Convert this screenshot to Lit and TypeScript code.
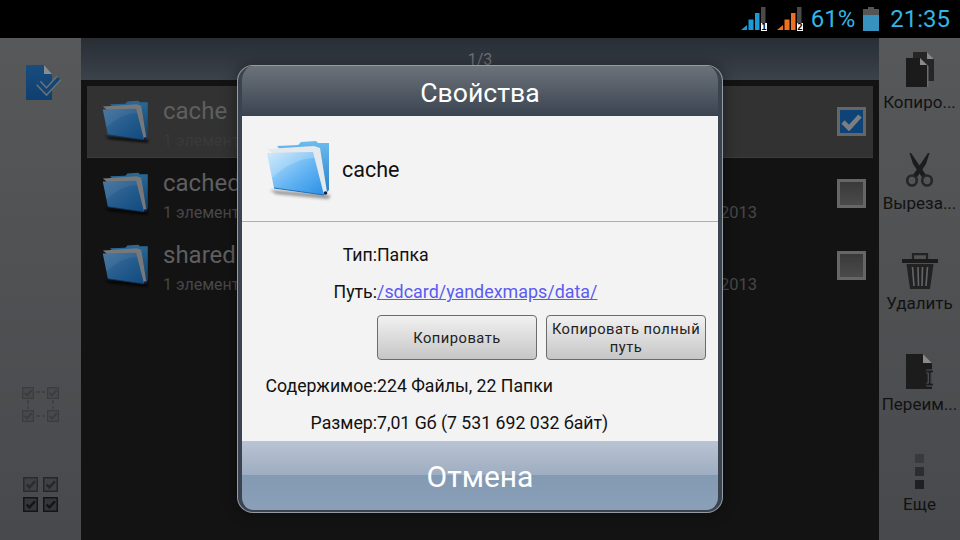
import { LitElement, html, css, svg } from "lit";
import { customElement } from "lit/decorators.js";

const folder = (id: string, dim: boolean) => svg`
<svg class="folder" viewBox="0 0 66 62" width="66" height="62">
  <defs>
    <linearGradient id="${id}a" x1="0" y1="0" x2="1" y2="1">
      <stop offset="0" stop-color="${dim ? "#40709c" : "#c4e6fd"}"/><stop offset="0.55" stop-color="${dim ? "#235a8c" : "#63b4f2"}"/><stop offset="1" stop-color="${dim ? "#134a7e" : "#2c8fe6"}"/>
    </linearGradient>
    <linearGradient id="${id}b" x1="0" y1="0" x2="0" y2="1">
      <stop offset="0" stop-color="${dim ? "#2a6a98" : "#6bbcf0"}"/><stop offset="1" stop-color="${dim ? "#123f68" : "#2a7fc9"}"/>
    </linearGradient>
    <filter id="${id}s" x="-20%" y="-100%" width="140%" height="300%"><feGaussianBlur stdDeviation="1.5"/></filter>
  </defs>
  <path d="M4 50 L58 54 L65 56 L62 59 L10 54 Z" fill="${dim ? "#000" : "#777"}" opacity="0.75" filter="url(#${id}s)"/>
  <path d="M11 6 L32 5 L35 2 L50 1 L52 3 L63 3 L63 50 L60 53 L50 50 Z" fill="url(#${id}b)"/>
  <path d="M1 9 L48 6 L54 8 L61 52 L58 54 Z" fill="${dim ? "#77787a" : "#e6e9ec"}"/>
  <path d="M1 13 L47 12 L58 55 L8 48 Z" fill="url(#${id}a)"/>
  <path d="M1 13 L47 12 L49 18 C32 18 18 27 6 38 Z" fill="#fff" opacity="${dim ? "0.06" : "0.2"}"/>
  <path d="M8 48 L58 55" stroke="${dim ? "#0d3660" : "#1f6fbd"}" stroke-width="1" fill="none"/>
  <circle cx="59.5" cy="53" r="1.8" fill="#10204a"/>
</svg>`;

const check = (fill: string, stroke: string) => svg`
<rect x="0.75" y="0.75" width="13.5" height="13.5" fill="${fill}" stroke="${stroke}" stroke-width="1.5"/>
<path d="M3.6 7.5 L6.4 10.4 L12 4.2" fill="none" stroke="${stroke}" stroke-width="2.4"/>`;

@customElement("app-root")
export class AppRoot extends LitElement {
  static styles = css`
    :host { display: block; width: 960px; height: 540px; overflow: hidden; position: relative; background: #000; font-family: Roboto, "Noto Sans", sans-serif; }
    .status { height: 38px; background: #000; display: flex; align-items: center; justify-content: flex-end; color: #33b5e5; font-size: 24px; padding-right: 10px; box-sizing: border-box; }
    .status .pct { margin: 0 8px 0 8px; }
    .status .time { margin-left: 11px; }
    .sig + .sig { margin-left: 10px; }
    .body { height: 502px; display: flex; background: #131313; }
    .side { background: linear-gradient(#565859, #47494c); flex: none; display: flex; flex-direction: column; align-items: center; }
    .left { width: 81px; padding-top: 27px; box-sizing: border-box; }
    .left .doc { margin-left: 6px; }
    .left .grid1 { margin-top: 287px; }
    .left .grid2 { margin-top: 55px; }
    .left svg { display: block; }
    .main { flex: 1; min-width: 0; display: flex; flex-direction: column; background: #131313; }
    .page { height: 42px; flex: none; background: linear-gradient(#292e35, #3c424a); color: #6e7278; font-size: 16px; text-align: center; line-height: 44px; }
    .list { display: flex; flex-direction: column; padding: 6px 6px 0; }
    .row { height: 72px; box-sizing: border-box; display: flex; align-items: flex-start; position: relative; padding-left: 15px; flex: none; }
    .row.first { background: #323232; border-bottom: 1px solid #3c3c3c; }
    .row .folder { width: 48px; height: 45px; flex: none; margin: 14px 13px 0 0; }
    .txt { display: flex; flex-direction: column; margin-top: 10px; }
    .name { color: #5f5f5f; font-size: 24px; line-height: 30px; }
    .sub { color: #474747; font-size: 16px; line-height: 22px; height: 22px; margin-top: 4px; }
    .first .sub { color: #3a3a3a; }
    .date { position: absolute; right: 116px; top: 44px; line-height: 22px; color: #474747; font-size: 16.5px; }
    .cb { position: absolute; right: 7px; top: 21px; width: 29px; height: 29px; box-sizing: border-box; border: 3px solid #666; background: linear-gradient(#3a3a3a, #4a4a4a); }
    .cb.on { background: #0d4377; display: flex; align-items: center; justify-content: center; }
    .right { width: 81px; padding-top: 14px; box-sizing: border-box; }
    .act { height: 100.5px; width: 81px; display: flex; flex-direction: column; align-items: center; color: #121212; font-size: 17px; line-height: 20px; white-space: nowrap; flex: none; }
    .act .ic { height: 36px; width: 81px; display: flex; align-items: flex-start; justify-content: center; margin-bottom: 4px; }
    .modal { position: absolute; left: 238px; top: 66px; width: 484px; height: 446px; box-sizing: border-box; border: 4px solid #3a4450; border-top: none; border-bottom-width: 2px; border-radius: 15px; background: #3a4450; box-shadow: 0 0 0 1px #979ca3, 0 0 14px 3px rgba(0,0,0,0.3); overflow: hidden; display: flex; flex-direction: column; }
    .head { height: 50px; flex: none; margin: 0 -4px; background: linear-gradient(#6c727a, #3a4450); color: #fff; font-size: 26.6px; display: flex; align-items: center; justify-content: center; padding-top: 2px; box-sizing: border-box; }
    .content { flex: 1; min-height: 0; overflow: hidden; background: #f3f3f3; color: #111; font-size: 17.7px; }
    .top { height: 106px; display: flex; align-items: center; border-bottom: 1px solid #aeaeae; padding-left: 24px; box-sizing: border-box; }
    .top .folder { margin-right: 10px; margin-top: 4px; }
    .top span { font-size: 21.5px; color: #111; margin-top: 2px; }
    .info { display: grid; grid-template-columns: 135px 1fr; padding-top: 15px; }
    .k { text-align: right; height: 37px; line-height: 36px; white-space: nowrap; }
    .v { height: 37px; line-height: 36px; white-space: nowrap; }
    .link { color: #5b5bf0; text-decoration: underline; font-size: 17.9px; }
    .btns { grid-column: 2; display: flex; gap: 9px; height: 49px; padding-top: 4px; box-sizing: border-box; margin-bottom: 8px; }
    .btn { width: 160px; height: 45px; box-sizing: border-box; border: 1px solid #6b6b6b; border-radius: 4px; background: linear-gradient(#f1f1f1, #c6c6c6); color: #222; font-size: 14.7px; line-height: 18px; letter-spacing: 0.5px; display: flex; align-items: center; justify-content: center; text-align: center; padding: 1px 4px 0; }
    .cancel { height: 69px; flex: none; background: linear-gradient(#b9c4d3 0, #9eadc1 49%, #839ab3 49%, #8b9fb8 100%); color: #fff; font-size: 30px; display: flex; align-items: center; justify-content: center; padding-top: 1px; box-sizing: border-box; }
  `;

  private sig(a: string, n: string) {
    return svg`<svg class="sig" width="26" height="24" viewBox="0 0 26 24">
      <path d="M0 23 L6 23 L6 18 Z" fill="${a}"/>
      <rect x="7.5" y="12.5" width="5" height="10.5" fill="${a}"/>
      <rect x="14" y="6" width="4.5" height="17" fill="${a}"/>
      <rect x="20" y="0" width="4.5" height="16" fill="#4a4a4a"/>
      <rect x="20" y="16" width="6" height="8" fill="#fff"/>
      <text x="23" y="23" font-size="9" font-weight="700" text-anchor="middle" fill="#000" font-family="DejaVu Sans Mono">${n}</text>
    </svg>`;
  }

  private row(name: string, sub: string, date: string, on: boolean, i: number) {
    return html`<div class="row ${on ? "first" : ""}">
      ${folder("l" + i, true)}
      <div class="txt"><div class="name">${name}</div><div class="sub">${sub}</div></div>
      ${date ? html`<div class="date">${date}</div>` : ""}
      <div class="cb ${on ? "on" : ""}">${on ? svg`<svg width="21" height="18" viewBox="0 0 21 18"><path d="M2 9 L8 15 L19 3" fill="none" stroke="#7c7f82" stroke-width="4.6"/></svg>` : ""}</div>
    </div>`;
  }

  render() {
    return html`
      <div class="status">
        ${this.sig("#1a9ad6", "1")}
        ${this.sig("#f07020", "2")}
        <span class="pct">61%</span>
        <svg width="16" height="24" viewBox="0 0 16 24"><rect x="5" y="0" width="6" height="3" fill="#555"/><rect x="0" y="2" width="16" height="6" fill="#555"/><rect x="0" y="8" width="16" height="16" fill="#3793bd"/></svg>
        <span class="time">21:35</span>
      </div>
      <div class="body">
        <div class="side left">
          <svg class="doc" width="35" height="35" viewBox="0 0 35 35">
            <defs><linearGradient id="doc" x1="0" y1="0" x2="0" y2="1"><stop offset="0" stop-color="#1a4c7e"/><stop offset="1" stop-color="#0f3f70"/></linearGradient></defs>
            <path d="M0 0 H18 L26 9 V35 H0 Z" fill="url(#doc)"/>
            <path d="M18 0 L26 9 H18 Z" fill="#8a8d90"/>
            <path d="M12.5 18 L20.5 26.5 L33 13" fill="none" stroke="#6a7278" stroke-width="6.5"/>
            <path d="M12.5 18 L20.5 26.5 L33 13" fill="none" stroke="#124475" stroke-width="3.5"/>
          </svg>
          <svg class="grid1" width="37" height="35" viewBox="0 0 37 35">
            <path d="M14 5 H23 M6 13 V22 M31 13 V22 M14 29 H23" stroke="#3c3e40" stroke-width="1.5" stroke-dasharray="4 2" fill="none"/>
            <g transform="translate(0 0) scale(0.8)">${check("#47494b", "#3a3c3e")}</g>
            <g transform="translate(25 0) scale(0.8)">${check("#47494b", "#3a3c3e")}</g>
            <g transform="translate(0 23) scale(0.8)">${check("#47494b", "#3a3c3e")}</g>
            <g transform="translate(25 23) scale(0.8)">${check("#47494b", "#3a3c3e")}</g>
          </svg>
          <svg class="grid2" width="35" height="35" viewBox="0 0 35 35">
            <g transform="translate(0 0)">${check("#3f4143", "#2a2b2d")}</g>
            <g transform="translate(20 0)">${check("#3f4143", "#26272a")}</g>
            <g transform="translate(0 20)">${check("#343638", "#141516")}</g>
            <g transform="translate(20 20)">${check("#343638", "#141516")}</g>
          </svg>
        </div>
        <div class="main">
          <div class="page">1/3</div>
          <div class="list">
            ${this.row("cache", "1 элемент", "", true, 1)}
            ${this.row("cached", "1 элемент", "2013", false, 2)}
            ${this.row("shared", "1 элемент", "2013", false, 3)}
          </div>
        </div>
        <div class="side right">
          <div class="act"><div class="ic"><svg width="28" height="35" viewBox="0 0 28 35">
            <path d="M7 0 H21 L28 7 V29 H7 Z" fill="#262626"/><path d="M21 0 L28 7 H21 Z" fill="#888"/>
            <path d="M0 6 H14 L22.5 14 V35.5 H0 Z" fill="#6a6c6e"/>
            <path d="M0 6 H14 L21 13 V35 H0 Z" fill="#1b1b1b"/><path d="M14 6 L21 13 H14 Z" fill="#8a8a8a"/>
          </svg></div>Копиро...</div>
          <div class="act"><div class="ic"><svg width="27" height="34" viewBox="0 0 27 34">
            <path d="M3.5 0 L5 0 L20 22 L16.5 25 L7 11 Z" fill="#1c1c1c"/>
            <path d="M23.5 0 L22 0 L7 22 L10.5 25 L20 11 Z" fill="#1c1c1c"/>
            <ellipse cx="6" cy="27.5" rx="4.8" ry="5" fill="none" stroke="#262626" stroke-width="2.6"/>
            <ellipse cx="21" cy="27.5" rx="4.8" ry="5" fill="none" stroke="#262626" stroke-width="2.6"/>
          </svg></div>Выреза...</div>
          <div class="act"><div class="ic"><svg width="36" height="36" viewBox="0 0 36 36">
            <path d="M11 6 V1.2 H25 V6" fill="none" stroke="#222" stroke-width="2.2"/>
            <rect x="0" y="6" width="36" height="4" fill="#1c1c1c"/>
            <path d="M4.5 11 H31.5 L28 36 H8 Z" fill="#222"/>
            <path d="M10.5 14 L12 33 M16 14 L16.5 33 M20.5 14 L20 33 M25.5 14 L24 33" stroke="#636567" stroke-width="1.6"/>
          </svg></div>Удалить</div>
          <div class="act"><div class="ic"><svg width="28" height="35" viewBox="0 0 28 35">
            <path d="M0 0 H17 L26 9 V35 H0 Z" fill="#1c1c1c"/><path d="M17 0 L26 9 H17 Z" fill="#8a8a8a"/>
            <path d="M20.5 17.5 H27 M23.7 17.5 V30.5 M20.5 30.5 H27" stroke="#55575a" stroke-width="4" fill="none"/>
            <path d="M20.5 17.5 H27 M23.7 17.5 V30.5 M20.5 30.5 H27" stroke="#1c1c1c" stroke-width="1.8" fill="none"/>
          </svg></div>Переим...</div>
          <div class="act"><div class="ic"><svg width="9" height="35" viewBox="0 0 9 35">
            <rect width="9" height="9" y="0" fill="#383a3c"/><rect width="9" height="9" y="13" fill="#2c2d2f"/><rect width="9" height="9" y="26" fill="#1f2021"/>
          </svg></div>Еще</div>
        </div>
      </div>
      <div class="modal">
        <div class="head">Свойства</div>
        <div class="content">
          <div class="top">${folder("m", false)}<span>cache</span></div>
          <div class="info">
            <div class="k">Тип:</div><div class="v">Папка</div>
            <div class="k">Путь:</div><div class="v"><span class="link">/sdcard/yandexmaps/data/</span></div>
            <div class="btns"><div class="btn">Копировать</div><div class="btn">Копировать полный путь</div></div>
            <div class="k">Содержимое:</div><div class="v">224 Файлы, 22 Папки</div>
            <div class="k">Размер:</div><div class="v">7,01 Gб (7 531 692 032 байт)</div>
          </div>
        </div>
        <div class="cancel">Отмена</div>
      </div>
    `;
  }
}
